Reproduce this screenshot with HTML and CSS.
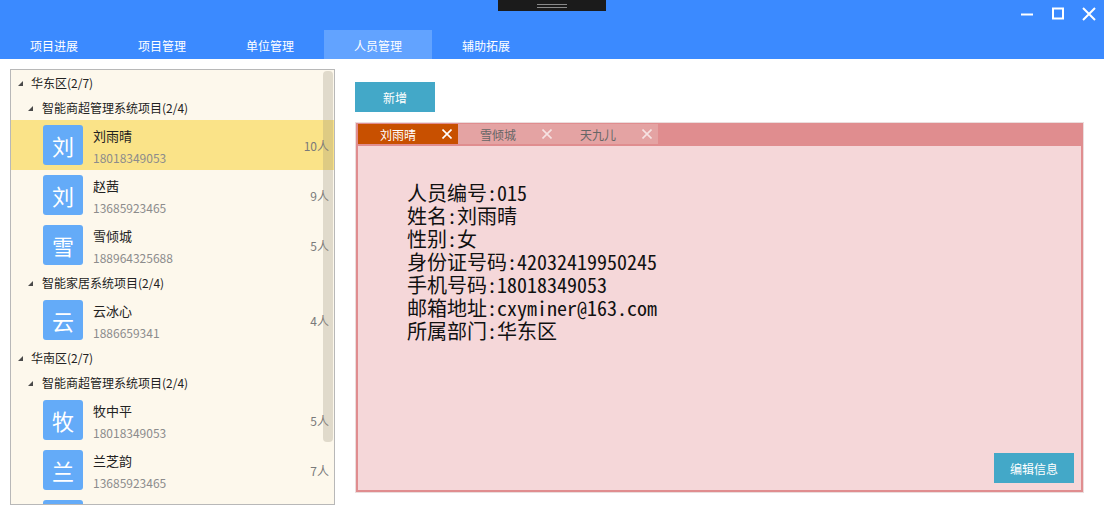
FILE: index.html
```html
<!DOCTYPE html>
<html lang="zh-CN">
<head>
<meta charset="utf-8">
<title>人员管理</title>
<link rel="stylesheet" href="styles.css">
</head>
<body>
<header class="header">
  <div class="titlebar">
    <div class="grip"><span class="grip-line"></span><span class="grip-line"></span></div>
    <div class="controls">
      <svg class="ctl" width="14" height="14" viewBox="0 0 14 14"><path d="M1 7.5H13" stroke="#fff" stroke-width="2"/></svg>
      <svg class="ctl" width="14" height="14" viewBox="0 0 14 14"><rect x="2" y="1.5" width="10" height="10" fill="none" stroke="#fff" stroke-width="2"/></svg>
      <svg class="ctl" width="14" height="14" viewBox="0 0 14 14"><path d="M1 1L13 13M13 1L1 13" stroke="#fff" stroke-width="2"/></svg>
    </div>
  </div>
  <nav class="nav">
    <div class="nav-item">项目进展</div>
    <div class="nav-item">项目管理</div>
    <div class="nav-item">单位管理</div>
    <div class="nav-item active">人员管理</div>
    <div class="nav-item">辅助拓展</div>
  </nav>
</header>
<main class="main">
  <aside class="tree">
    <div class="node l1"><span class="tri"></span>华东区(2/7)</div>
    <div class="node l2"><span class="tri"></span>智能商超管理系统项目(2/4)</div>
    <div class="person selected"><div class="avatar">刘</div><div class="info"><div class="name">刘雨晴</div><div class="phone">18018349053</div></div><div class="count">10人</div></div>
    <div class="person"><div class="avatar">刘</div><div class="info"><div class="name">赵茜</div><div class="phone">13685923465</div></div><div class="count">9人</div></div>
    <div class="person"><div class="avatar">雪</div><div class="info"><div class="name">雪倾城</div><div class="phone">188964325688</div></div><div class="count">5人</div></div>
    <div class="node l2"><span class="tri"></span>智能家居系统项目(2/4)</div>
    <div class="person"><div class="avatar">云</div><div class="info"><div class="name">云冰心</div><div class="phone">1886659341</div></div><div class="count">4人</div></div>
    <div class="node l1"><span class="tri"></span>华南区(2/7)</div>
    <div class="node l2"><span class="tri"></span>智能商超管理系统项目(2/4)</div>
    <div class="person"><div class="avatar">牧</div><div class="info"><div class="name">牧中平</div><div class="phone">18018349053</div></div><div class="count">5人</div></div>
    <div class="person"><div class="avatar">兰</div><div class="info"><div class="name">兰芝韵</div><div class="phone">13685923465</div></div><div class="count">7人</div></div>
    <div class="person"><div class="avatar"></div></div>
    <div class="scrollbar"></div>
  </aside>
  <section class="workspace">
    <button class="btn btn-add">新增</button>
    <div class="tabpanel">
      <div class="tabpanel-inner">
        <div class="tabs">
          <div class="tab active"><span class="tab-label">刘雨晴</span><svg class="tab-x" width="10" height="10" viewBox="0 0 10 10"><path d="M0.5 0.5L9.5 9.5M9.5 0.5L0.5 9.5"/></svg></div>
          <div class="tab"><span class="tab-label">雪倾城</span><svg class="tab-x" width="10" height="10" viewBox="0 0 10 10"><path d="M0.5 0.5L9.5 9.5M9.5 0.5L0.5 9.5"/></svg></div>
          <div class="tab"><span class="tab-label">天九儿</span><svg class="tab-x" width="10" height="10" viewBox="0 0 10 10"><path d="M0.5 0.5L9.5 9.5M9.5 0.5L0.5 9.5"/></svg></div>
        </div>
        <div class="content">
          <div class="details">
            <div class="line">人员编号:015</div>
            <div class="line">姓名:刘雨晴</div>
            <div class="line">性别:女</div>
            <div class="line">身份证号码:42032419950245</div>
            <div class="line">手机号码:18018349053</div>
            <div class="line">邮箱地址:cxyminer@163.com</div>
            <div class="line">所属部门:华东区</div>
          </div>
          <button class="btn btn-edit">编辑信息</button>
        </div>
      </div>
    </div>
  </section>
</main>
</body>
</html>
```

FILE: styles.css
```css
* { box-sizing: border-box; }
html, body { margin: 0; padding: 0; }
body {
  width: 1104px;
  height: 516px;
  overflow: hidden;
  background: #fff;
  font-family: "Noto Sans CJK SC", "Noto Sans", sans-serif;
  font-size: 12px;
  color: #222;
}
.header {
  background: #3b8aff;
  height: 59px;
  display: flex;
  flex-direction: column;
}
.titlebar {
  height: 30px;
  position: relative;
  display: flex;
  justify-content: flex-end;
}
.grip {
  position: absolute;
  left: 498px;
  top: 0;
  width: 108px;
  height: 11px;
  background: #1b1b1b;
  display: flex;
  flex-direction: column;
  align-items: center;
  justify-content: center;
  gap: 2px;
  padding-top: 1px;
}
.grip-line {
  width: 30px;
  height: 1px;
  background: #8a8a8a;
}
.controls {
  display: flex;
  align-items: center;
  gap: 17px;
  padding: 0 8px 2px 0;
}
.ctl { display: block; }
.nav {
  display: flex;
  height: 29px;
}
.nav-item {
  width: 108px;
  display: flex;
  align-items: center;
  justify-content: center;
  color: #fff;
  font-size: 12px;
  padding-top: 1px;
}
.nav-item.active { background: #62a3ff; }

.main {
  display: flex;
  padding: 10px 0 0 10px;
}
.tree {
  position: relative;
  width: 325px;
  height: 436px;
  border: 1px solid #b8b8b8;
  background: #fdf8ec;
  overflow: hidden;
}
.node {
  height: 25px;
  display: flex;
  align-items: center;
  font-size: 12px;
  color: #222;
}
.node.l1 { padding-left: 7px; }
.node.l2 { padding-left: 17px; }
.tri {
  width: 0;
  height: 0;
  border-left: 5px solid transparent;
  border-bottom: 5px solid #4a4a4a;
  margin-right: 8px;
  margin-top: 1px;
}
.node.l2 .tri { margin-right: 9px; }
.person {
  height: 50px;
  display: flex;
  align-items: flex-start;
  padding-left: 32px;
  padding-right: 5px;
}
.person.selected { background: #fae388; }
.avatar {
  width: 40px;
  height: 40px;
  margin-top: 5px;
  border-radius: 3px;
  background: #64abf8;
  color: #fff;
  font-size: 22px;
  display: flex;
  align-items: center;
  justify-content: center;
}
.info {
  margin-left: 10px;
  flex: 1;
  display: flex;
  flex-direction: column;
}
.name {
  font-size: 13px;
  color: #222;
  line-height: 18px;
  margin-top: 7px;
}
.phone {
  font-size: 12px;
  color: #8c8c8c;
  line-height: 16px;
  margin-top: 5px;
}
.count {
  align-self: center;
  font-size: 12px;
  color: #7a7a7a;
}
.scrollbar {
  position: absolute;
  left: 312px;
  top: 1px;
  width: 10px;
  height: 371px;
  border-radius: 4px;
  background: rgba(150, 140, 120, 0.28);
}

.workspace {
  margin-left: 20px;
  padding-top: 13px;
  display: flex;
  flex-direction: column;
}
.btn {
  border: none;
  background: #43a8c8;
  color: #fff;
  font-family: "Noto Sans CJK SC", sans-serif;
  font-size: 12px;
  width: 80px;
  height: 30px;
  padding: 0;
}
.tabpanel {
  margin-top: 10px;
  width: 729px;
  height: 371px;
  border: 1px solid #ebdddd;
}
.tabpanel-inner {
  height: 100%;
  background: #e08d8f;
  padding: 1px 2px 2px 2px;
  display: flex;
  flex-direction: column;
}
.tabs {
  display: flex;
  height: 22px;
  padding-bottom: 2px;
}
.tab {
  width: 100px;
  height: 20px;
  background: #e4a3a3;
  display: flex;
  align-items: center;
  padding-left: 22px;
  padding-right: 6px;
  color: #666;
  font-size: 12px;
}
.tab.active { background: #c85000; color: #fff; }
.tab-label { flex: 1; }
.tab-x { display: block; stroke: #f6e2e2; stroke-width: 1.6; }
.tab.active .tab-x { stroke: #fff; }
.content {
  flex: 1;
  background: #f5d7d9;
  display: flex;
  flex-direction: column;
  padding: 35px 7px 7px 49px;
}
.details {
  font-family: "Noto Sans Mono CJK SC", "Noto Sans CJK SC", monospace;
  font-size: 20px;
  color: #111;
}
.line {
  height: 23px;
  line-height: 23px;
}
.btn-edit {
  margin-top: auto;
  align-self: flex-end;
}
```
